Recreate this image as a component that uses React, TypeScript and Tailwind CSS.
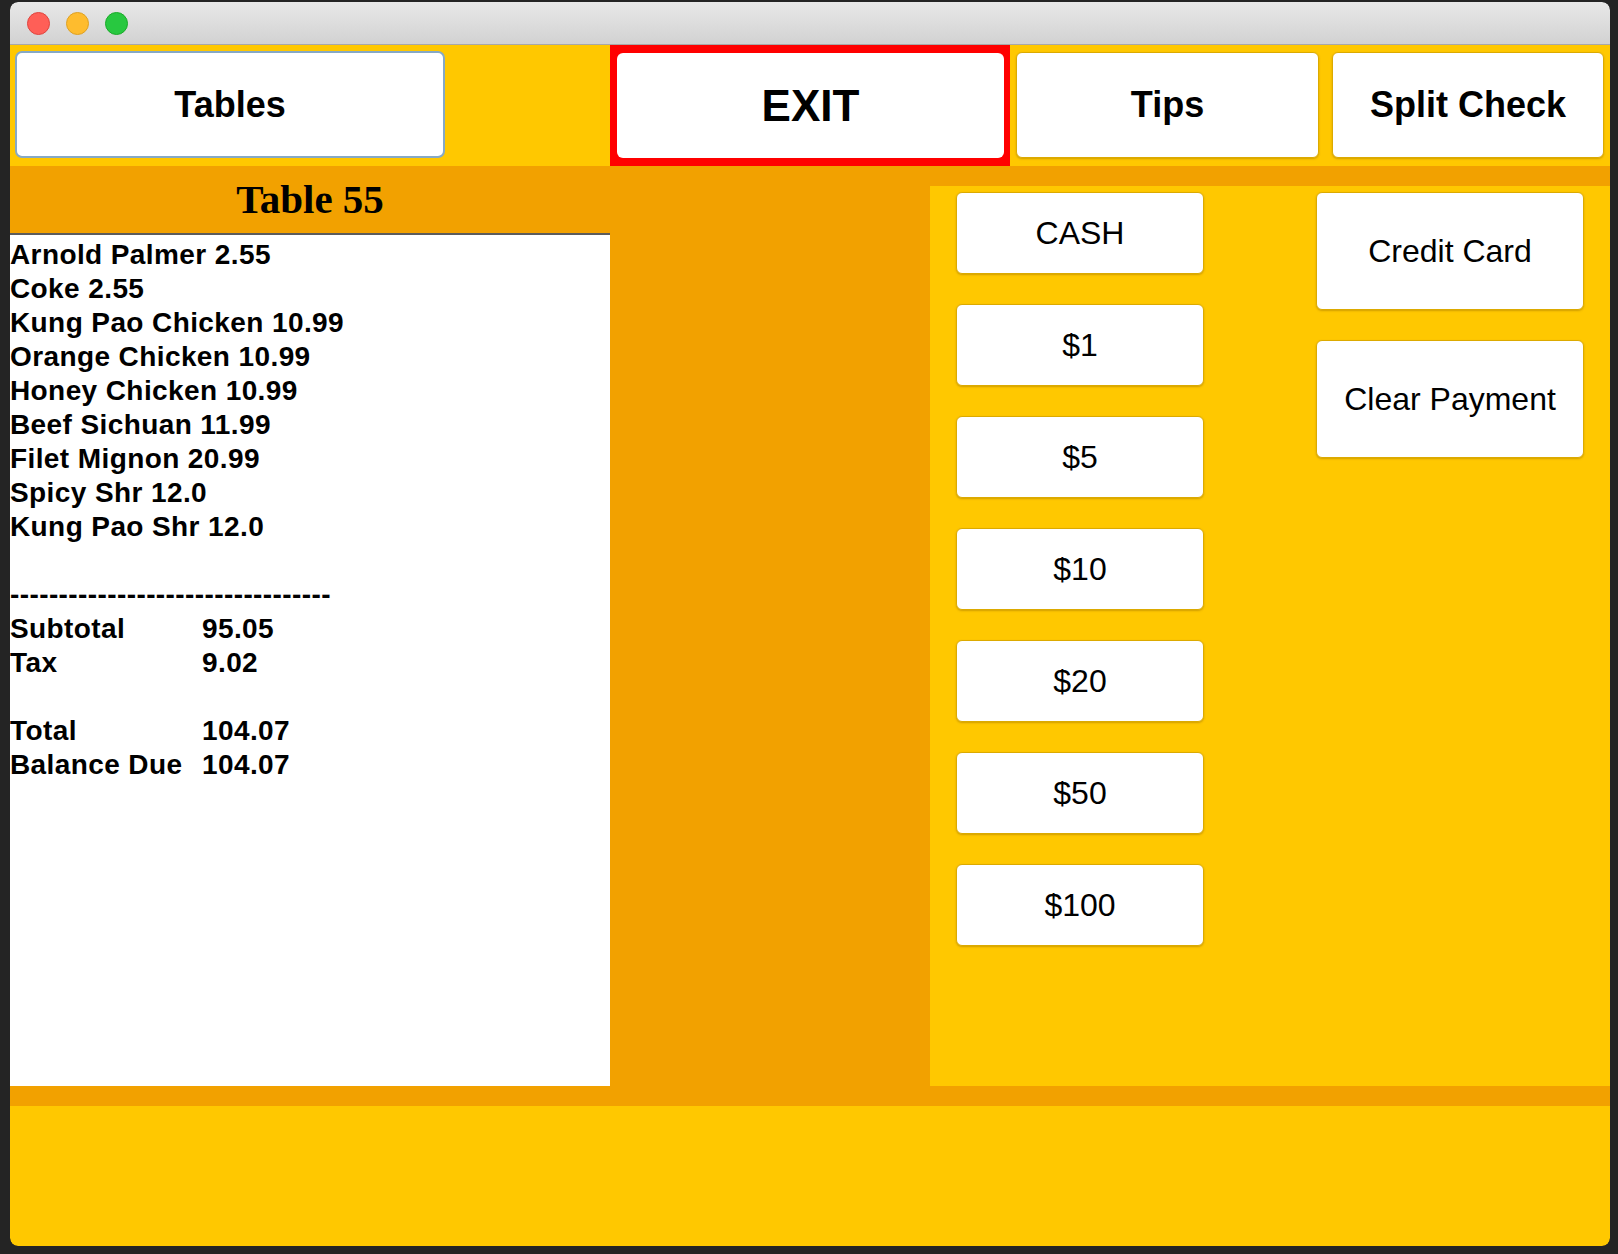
import React from "react";

const sans = { fontFamily: '"Liberation Sans", Arial, sans-serif' };
const serif = { fontFamily: '"Liberation Serif", "Times New Roman", serif' };

const items = [
  "Arnold Palmer 2.55",
  "Coke 2.55",
  "Kung Pao Chicken 10.99",
  "Orange Chicken 10.99",
  "Honey Chicken 10.99",
  "Beef Sichuan 11.99",
  "Filet Mignon 20.99",
  "Spicy Shr 12.0",
  "Kung Pao Shr 12.0",
];

function Row({ label, value }: { label: string; value: string }) {
  return (
    <div className="flex h-[34px] items-center">
      <span className="w-[192px]">{label}</span>
      <span>{value}</span>
    </div>
  );
}

function CashBtn({ label }: { label: string }) {
  return (
    <div className="h-[82px] w-[248px] bg-white rounded-[6px] border border-[#dcaa00] shadow-[0_1px_2px_rgba(120,80,0,0.35)] flex items-center justify-center text-[32px] text-black">
      {label}
    </div>
  );
}

function SideBtn({ label }: { label: string }) {
  return (
    <div className="h-[118px] w-[268px] bg-white rounded-[6px] border border-[#dcaa00] shadow-[0_1px_2px_rgba(120,80,0,0.35)] flex items-center justify-center text-[32px] text-black">
      {label}
    </div>
  );
}

export default function App() {
  return (
    <div
      className="w-[1618px] h-[1254px] bg-[#242424] flex pl-[10px] pr-[8px] pt-[2px] pb-[8px] overflow-hidden"
      style={sans}
    >
      <div className="w-[1600px] flex flex-col rounded-[8px] overflow-hidden">
        {/* title bar */}
        <div className="h-[43px] shrink-0 bg-gradient-to-b from-[#e8e8e8] to-[#d2d2d2] border-b border-[#a8a8a8] flex items-center pl-[17px] gap-[16px] rounded-t-[8px]">
          <div className="w-[23px] h-[23px] rounded-full bg-[#ff5f57] border border-[#e0443e]" />
          <div className="w-[23px] h-[23px] rounded-full bg-[#febc2e] border border-[#dea123]" />
          <div className="w-[23px] h-[23px] rounded-full bg-[#28c840] border border-[#1aab29]" />
        </div>

        {/* top bar */}
        <div className="h-[121px] shrink-0 bg-[#ffc800] flex items-start">
          <div className="ml-[5px] mt-[6px] w-[430px] h-[107px] bg-white rounded-[7px] border-2 border-[#86a9c6] flex items-center justify-center text-[36px] font-bold text-black">
            Tables
          </div>
          <div className="ml-[165px] w-[400px] h-[121px] bg-[#ff0000] pl-[7px] pr-[6px] pt-[8px] pb-[8px] flex">
            <div className="flex-1 bg-white rounded-[6px] flex items-center justify-center text-[44px] font-bold text-black">
              EXIT
            </div>
          </div>
          <div className="ml-[6px] mt-[7px] w-[303px] h-[106px] bg-white rounded-[6px] border border-[#dcaa00] shadow-[0_1px_2px_rgba(120,80,0,0.35)] flex items-center justify-center text-[36px] font-bold text-black">
            Tips
          </div>
          <div className="ml-[13px] mt-[7px] w-[272px] h-[106px] bg-white rounded-[6px] border border-[#dcaa00] shadow-[0_1px_2px_rgba(120,80,0,0.35)] flex items-center justify-center text-[36px] font-bold text-black">
            Split Check
          </div>
        </div>

        {/* main */}
        <div className="h-[920px] shrink-0 bg-[#f2a100] flex">
          <div className="w-[600px] flex flex-col">
            <div
              className="h-[67px] shrink-0 flex items-center justify-center text-[41px] font-bold text-black"
              style={serif}
            >
              Table 55
            </div>
            <div className="flex-1 bg-white border-t-2 border-[#5c5c5c] pt-[3px] text-[28px] font-bold text-black leading-[34px] tracking-[0.4px]">
              {items.map((t) => (
                <div key={t} className="h-[34px] flex items-center whitespace-pre">
                  {t}
                </div>
              ))}
              <div className="h-[34px]" />
              <div className="h-[34px] flex items-center">{"-".repeat(33)}</div>
              <Row label="Subtotal" value="95.05" />
              <Row label="Tax" value="9.02" />
              <div className="h-[34px]" />
              <Row label="Total" value="104.07" />
              <Row label="Balance Due" value="104.07" />
            </div>
          </div>
          <div className="w-[320px]" />
          <div className="flex-1 pt-[20px] flex">
            <div className="flex-1 bg-[#ffc800] flex items-start pl-[26px] pt-[6px]">
              <div className="flex flex-col gap-[30px]">
                {["CASH", "$1", "$5", "$10", "$20", "$50", "$100"].map((l) => (
                  <CashBtn key={l} label={l} />
                ))}
              </div>
              <div className="ml-[112px] flex flex-col gap-[30px]">
                <SideBtn label="Credit Card" />
                <SideBtn label="Clear Payment" />
              </div>
            </div>
          </div>
        </div>

        {/* bottom */}
        <div className="h-[20px] shrink-0 bg-[#f2a100]" />
        <div className="flex-1 bg-[#ffc800] rounded-b-[8px]" />
      </div>
    </div>
  );
}
